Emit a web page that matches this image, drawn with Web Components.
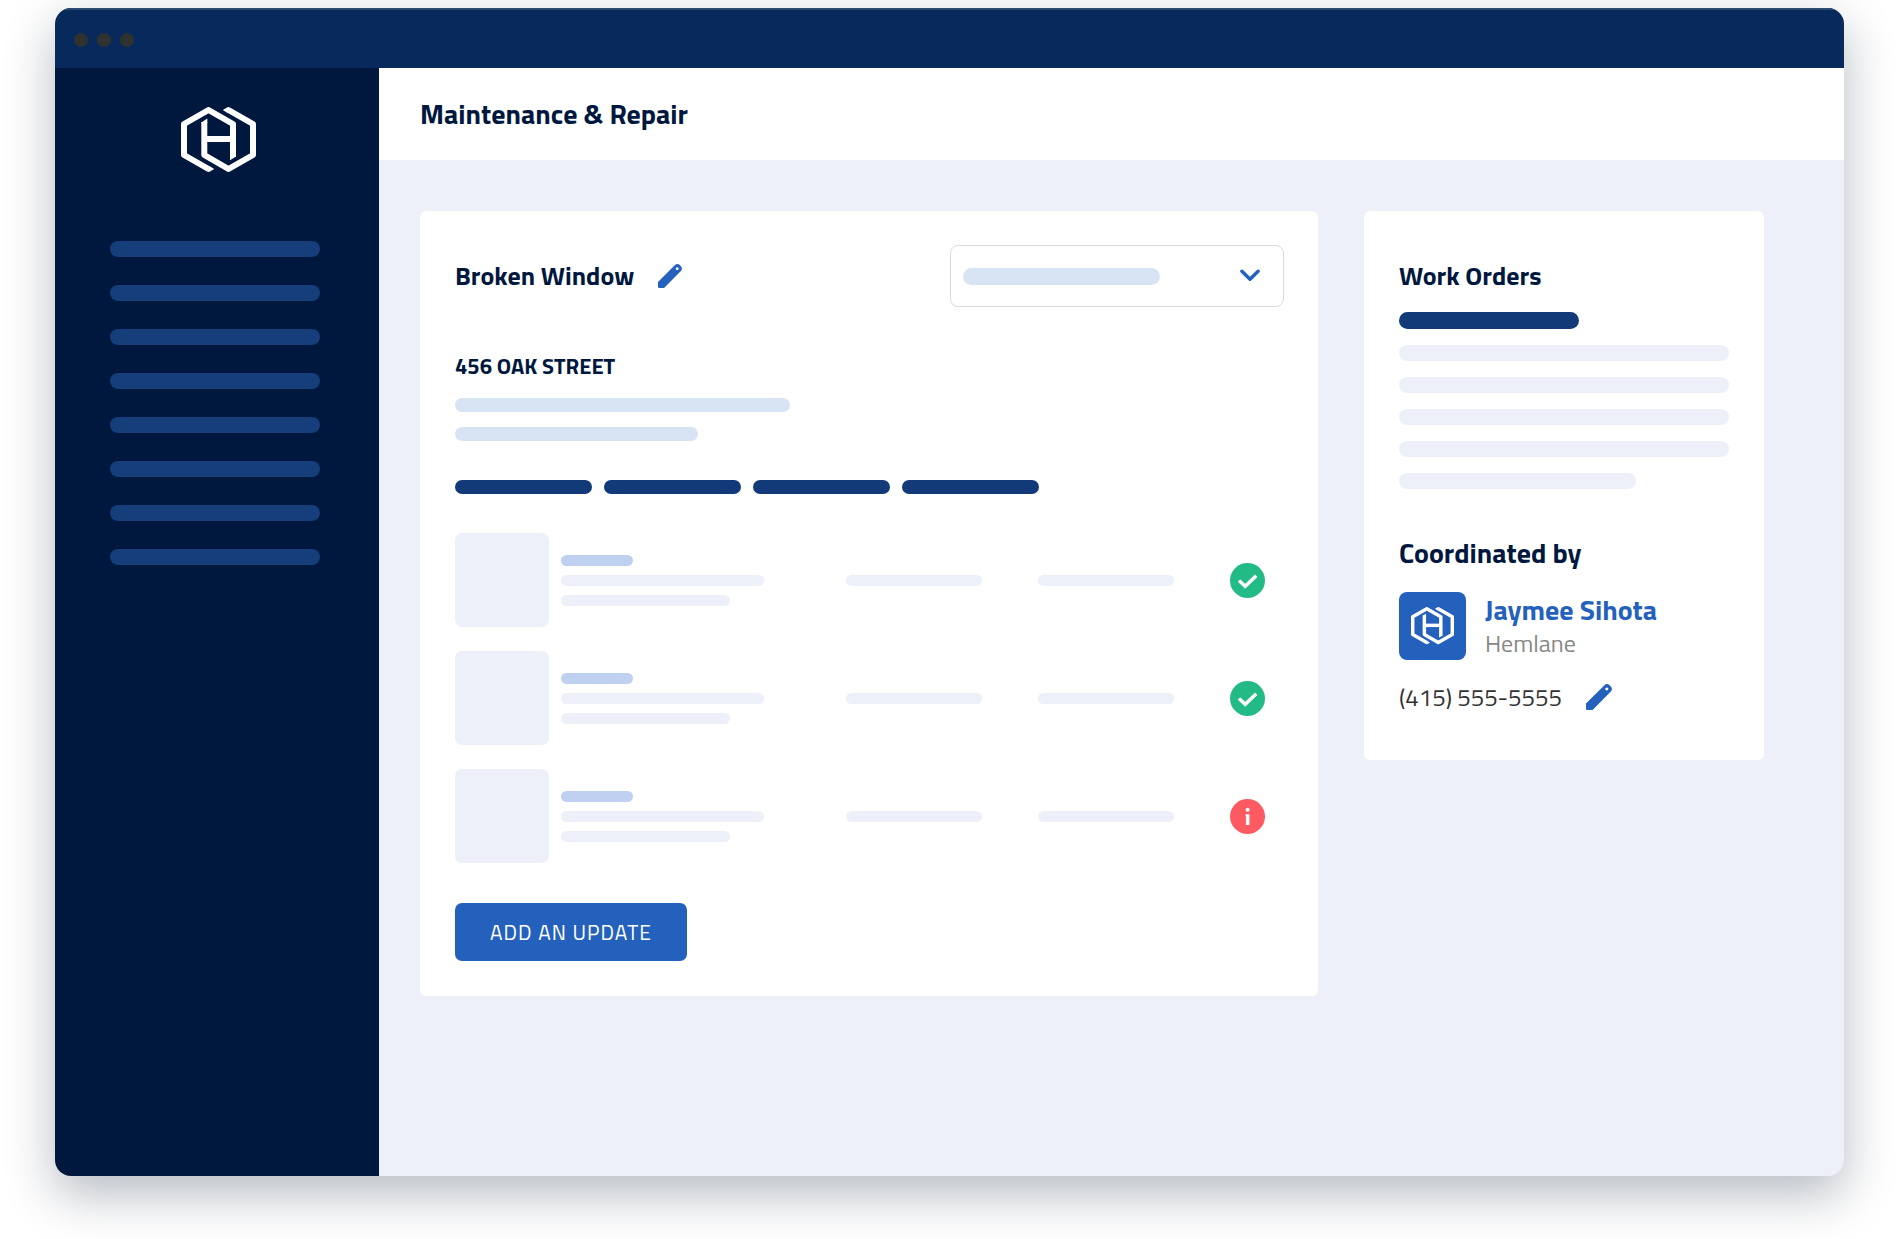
<!DOCTYPE html>
<html lang="en">
<head>
<meta charset="utf-8">
<meta name="viewport" content="width=device-width, initial-scale=1">
<title>Maintenance &amp; Repair</title>
<style>
  :root {
    --ink: #00183e;
    --navy: #133a78;
    --blue: #2461bd;
    --mist: #edf0f8;
    --sky: #d8e4f4;
    --periwinkle: #bfd0f0;
  }
  body {
    margin: 0;
    min-height: 100vh;
    box-sizing: border-box;
    padding: 8px 55px 63px;
    display: flex;
    background: #fff;
    color: var(--ink);
    font-family: "Titillium Web", Roboto, sans-serif;
  }
  app-window { flex: 1; }
</style>
</head>
<body>
<app-window>
  <side-bar slot="sidebar"></side-bar>
  <page-header slot="header">Maintenance &amp; Repair</page-header>
  <request-card></request-card>
  <work-orders></work-orders>
</app-window>

<script>
const LINE_TONES = ["navy", "sky", "periwinkle", "mist"],
    MENU_ITEMS = 8,
    TABS = 4,
    UPDATES = ["done", "done", "alert"];

const makeTemplate = (html) => {
  const template = document.createElement('template');
  template.innerHTML = html;
  return template;
};

class BaseElement extends HTMLElement {
  constructor(){
    super();
    this.attachShadow({mode: 'open'});
    this.shadowRoot.appendChild(this.constructor.template.content.cloneNode(true));
  }
}

/*
 * Placeholder line, tone picks its colour
 */
class SkeletonLine extends BaseElement {
  static template = makeTemplate(`
<style>
  :host {
    display: block;
    box-sizing: border-box;
    width: var(--line-width, 100%);
    max-width: 100%;
    height: var(--line-height, 14px);
    border-radius: 9px;
    background: var(--mist);
  }
  ${LINE_TONES.map((tone) => `:host([tone="${tone}"]) { background: var(--${tone}); }`).join("\n  ")}
</style>`);
}
customElements.define('skeleton-line', SkeletonLine);

class BrandLogo extends BaseElement {
  static template = makeTemplate(`
<style>
  :host { display: block; width: 75px; color: #fff; }
  svg { display: block; width: 100%; height: auto; }
</style>
<svg viewBox="0 0 75 65" role="img" aria-label="Hemlane" fill="none" stroke="currentColor" stroke-width="6" stroke-linejoin="round">
  <path d="M27.5 62L3 48V17L27.5 3L52 17V50"/>
  <path d="M47.5 3L72 17V48L47.5 62L23.3 48V15"/>
  <path d="M24 32H51"/>
  <g fill="currentColor" stroke="none">
    <path d="M26 64.6Q27.5 65.4 29 64.5L33.2 61.9L28.5 59.1z"/>
    <path d="M49 .4Q47.5-.4 46 .5L41.8 3.1L46.5 5.9z"/>
    <path d="M20.3 15.4L26.3 11.6V16H20.3z"/>
    <path d="M49 49V53.2L55 49.6V49z"/>
  </g>
</svg>`);
}
customElements.define('brand-logo', BrandLogo);

class EditButton extends BaseElement {
  static template = makeTemplate(`
<style>
  :host { display: block; width: 24px; }
  button {
    display: block;
    width: 100%;
    padding: 0;
    border: 0;
    background: none;
    color: var(--blue);
    cursor: pointer;
  }
  svg { display: block; width: 100%; height: auto; }
</style>
<button type="button" aria-label="Edit">
  <svg viewBox="0 0 24 24" fill="currentColor" fill-rule="evenodd">
    <path d="M0 17.9L17 1.1C18.4-.3 20.4-.3 21.8 1.1L22.9 2.2C24.3 3.6 24.3 5.6 22.9 7L6.1 24H1.2Q0 24 0 22.8zM19.2 3.3a1.4 1.4 0 1 0 .01 0z"/>
  </svg>
</button>`);
}
customElements.define('edit-button', EditButton);

class StatusIcon extends BaseElement {
  static template = makeTemplate(`
<style>
  :host { display: block; width: 35px; color: #23bb85; }
  :host([state="alert"]) { color: #fd5a61; }
  svg { display: block; width: 100%; height: auto; }
  .alert, :host([state="alert"]) .done { display: none; }
  :host([state="alert"]) .alert { display: inline; }
</style>
<svg viewBox="0 0 35 35" aria-hidden="true">
  <circle cx="17.5" cy="17.5" r="17.5" fill="currentColor"/>
  <path class="done" d="M9 17.5L15.2 23.3L26.2 12.8" fill="none" stroke="#fff" stroke-width="3.4"/>
  <g class="alert" fill="#fff">
    <circle cx="17.6" cy="10.7" r="2"/>
    <path d="M15.4 15.3H19.4V26H15.9V16.4H15.4z"/>
  </g>
</svg>`);
}
customElements.define('status-icon', StatusIcon);

class StatusSelect extends BaseElement {
  static template = makeTemplate(`
<style>
  :host {
    display: grid;
    grid-template-columns: 1fr auto;
    align-items: center;
    width: 334px;
    height: 62px;
  }
  select {
    grid-area: 1 / 1 / 2 / 3;
    width: 100%;
    height: 100%;
    appearance: none;
    border: 1px solid #dadbde;
    border-radius: 8px;
    background: #fff;
  }
  skeleton-line, svg { grid-row: 1; z-index: 1; pointer-events: none; }
  skeleton-line {
    --line-width: 197px;
    --line-height: 17px;
    grid-column: 1;
    margin-left: 13px;
  }
  svg { grid-column: 2; width: 20px; margin-right: 24px; }
</style>
<select aria-label="Status"><option></option></select>
<skeleton-line tone="sky"></skeleton-line>
<svg viewBox="0 0 20 14" fill="none" stroke="var(--blue)" stroke-width="3.4" stroke-linecap="round" stroke-linejoin="round">
  <path d="M1.9 2.2L10 10.2L18.1 2.2"/>
</svg>`);
}
customElements.define('status-select', StatusSelect);

class AppWindow extends BaseElement {
  static template = makeTemplate(`
<style>
  :host {
    display: grid;
    grid-template: 60px 92px 1fr / 324px minmax(0, 1fr);
    overflow: hidden;
    border-radius: 16px;
    background: var(--mist);
    box-shadow: 0 18px 50px rgba(10, 25, 50, .3);
  }
  .title_bar {
    grid-column: 1 / 3;
    display: flex;
    align-items: center;
    gap: 9px;
    padding: 4px 19px 0;
    background: #08295b;
    box-shadow: inset 0 2px 1px #2d4c72;
  }
  .title_bar i {
    width: 14px;
    height: 14px;
    border-radius: 50%;
    background: #303232;
  }
  slot[name="sidebar"]::slotted(*) { grid-row: 2 / 4; }
  main {
    display: grid;
    grid-template-columns: minmax(0, 1fr) 400px;
    align-items: start;
    gap: 46px;
    padding: 51px 80px 51px 41px;
  }
</style>
<div class="title_bar"><i></i><i></i><i></i></div>
<slot name="sidebar"></slot>
<slot name="header"></slot>
<main><slot></slot></main>`);
}
customElements.define('app-window', AppWindow);

class SideBar extends BaseElement {
  static template = makeTemplate(`
<style>
  :host { display: block; padding: 39px 59px 39px 55px; background: var(--ink); }
  .brand { display: flex; justify-content: center; padding-left: 6px; }
  nav {
    --line-height: 16px;
    --navy: #153e7b;
    display: grid;
    gap: 28px;
    margin-top: 69px;
  }
</style>
<div class="brand"><brand-logo></brand-logo></div>
<nav aria-label="Main">${'<skeleton-line tone="navy"></skeleton-line>'.repeat(MENU_ITEMS)}</nav>`);
}
customElements.define('side-bar', SideBar);

class PageHeader extends BaseElement {
  static template = makeTemplate(`
<style>
  :host {
    display: flex;
    align-items: center;
    padding: 0 41px;
    background: #fff;
  }
  h1 { margin: 0; font-size: 28px; line-height: 32px; font-weight: 700; }
</style>
<h1><slot></slot></h1>`);
}
customElements.define('page-header', PageHeader);

class UpdateRow extends BaseElement {
  static template = makeTemplate(`
<style>
  :host {
    --line-height: 11px;
    display: flex;
    align-items: center;
    padding-right: 19px;
  }
  .thumb {
    flex: none;
    width: 94px;
    height: 94px;
    border-radius: 7px;
    background: var(--mist);
  }
  .lines { flex: 1; display: grid; gap: 9px; margin-left: 12px; }
  .name { --line-width: 72px; }
  .long { --line-width: 203px; }
  .short { --line-width: 169px; }
  .cell { --line-width: 136px; flex: none; margin-right: 56px; }
  status-icon { flex: none; }
</style>
<div class="thumb"></div>
<div class="lines">
  <skeleton-line class="name" tone="periwinkle"></skeleton-line>
  <skeleton-line class="long"></skeleton-line>
  <skeleton-line class="short"></skeleton-line>
</div>
<skeleton-line class="cell"></skeleton-line>
<skeleton-line class="cell"></skeleton-line>
<status-icon></status-icon>`);

  connectedCallback() {
    this.shadowRoot.querySelector("status-icon").setAttribute("state", this.getAttribute("state"));
  }
}
customElements.define('update-row', UpdateRow);

class RequestCard extends BaseElement {
  static template = makeTemplate(`
<style>
  :host {
    display: block;
    padding: 34px 34px 35px 35px;
    border-radius: 6px;
    background: #fff;
  }
  header { display: flex; align-items: center; margin-bottom: 44px; }
  h2 { margin: 0 24px 0 0; font-size: 26px; line-height: 32px; font-weight: 700; }
  h3 { margin: 0 0 17px; font-size: 22px; line-height: 30px; font-weight: 700; }
  status-select { margin-left: auto; }
  .address { display: grid; gap: 15px; }
  .line1 { --line-width: 335px; }
  .line2 { --line-width: 243px; }
  .tabs { --line-width: 137px; display: flex; gap: 12px; margin: 39px 0; }
  .updates { display: grid; gap: 24px; margin-bottom: 40px; }
  .add {
    height: 58px;
    padding: 0 35px;
    border: 0;
    border-radius: 7px;
    background: var(--blue);
    color: #fff;
    font: 400 21px/30px "Titillium Web", Roboto, sans-serif;
    letter-spacing: 1px;
    cursor: pointer;
  }
</style>
<header>
  <h2>Broken Window</h2>
  <edit-button></edit-button>
  <status-select></status-select>
</header>
<h3>456 OAK STREET</h3>
<div class="address">
  <skeleton-line class="line1" tone="sky"></skeleton-line>
  <skeleton-line class="line2" tone="sky"></skeleton-line>
</div>
<div class="tabs">${'<skeleton-line tone="navy"></skeleton-line>'.repeat(TABS)}</div>
<div class="updates">${UPDATES.map((state) => `<update-row state="${state}"></update-row>`).join("")}</div>
<button class="add" type="button">ADD AN UPDATE</button>`);
}
customElements.define('request-card', RequestCard);

class WorkOrders extends BaseElement {
  static template = makeTemplate(`
<style>
  :host {
    display: block;
    padding: 49px 35px 47px;
    border-radius: 6px;
    background: #fff;
  }
  h2 { margin: 0; font-size: 26px; line-height: 32px; font-weight: 700; }
  .coordinated { font-size: 28px; }
  .order {
    --line-height: 16px;
    display: grid;
    gap: 16px;
    margin: 20px 0 48px;
  }
  .title { --line-width: 180px; --line-height: 17px; }
  .last { --line-width: 237px; }
  .person { display: flex; align-items: center; gap: 19px; margin: 23px 0 21px; }
  .avatar {
    display: grid;
    place-items: center;
    width: 67px;
    height: 68px;
    border-radius: 8px;
    background: var(--blue);
  }
  .avatar brand-logo { width: 43px; }
  a { color: inherit; text-decoration: none; }
  .name { display: block; color: var(--blue); font-size: 28px; line-height: 34px; font-weight: 700; }
  .company { color: #888; font-size: 24px; line-height: 32px; }
  .phone {
    display: flex;
    align-items: center;
    gap: 24px;
    color: #333;
    font-size: 24px;
    line-height: 32px;
  }
  .phone edit-button { width: 26px; }
</style>
<h2>Work Orders</h2>
<div class="order">
  <skeleton-line class="title" tone="navy"></skeleton-line>
  ${'<skeleton-line></skeleton-line>'.repeat(4)}
  <skeleton-line class="last"></skeleton-line>
</div>
<h2 class="coordinated">Coordinated by</h2>
<div class="person">
  <div class="avatar"><brand-logo></brand-logo></div>
  <div>
    <a class="name" href="#jaymee">Jaymee Sihota</a>
    <div class="company">Hemlane</div>
  </div>
</div>
<div class="phone">
  <a href="tel:4155555555">(415) 555-5555</a>
  <edit-button></edit-button>
</div>`);
}
customElements.define('work-orders', WorkOrders);
</script>
</body>
</html>
